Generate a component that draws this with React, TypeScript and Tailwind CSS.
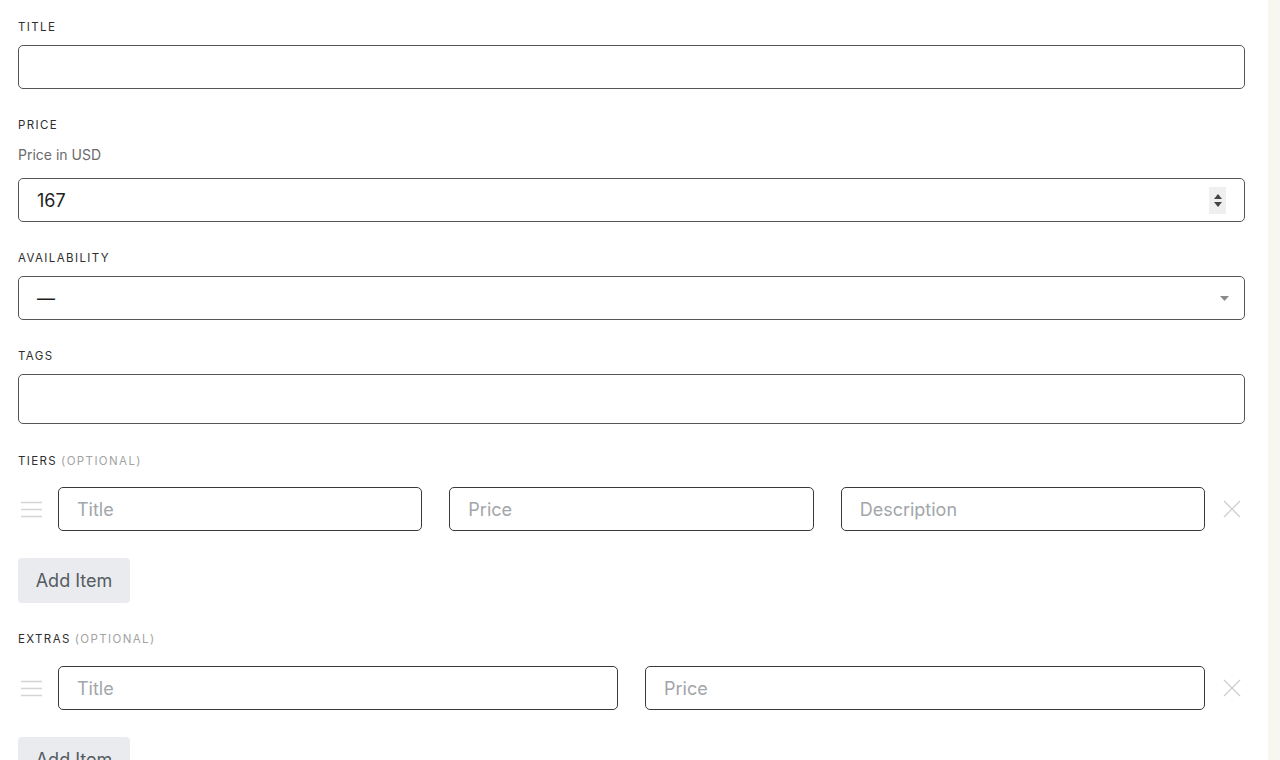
const Label = ({ text, optional }: { text: string; optional?: boolean }) => (
  <div className="h-4 pt-[1px] text-[11.5px] leading-4 font-normal tracking-[0.12em] text-[#2e2e2e]">
    {text}
    {optional && <span className="ml-1 text-[#a3a3a3]">(OPTIONAL)</span>}
  </div>
);

const Grip = () => (
  <div className="w-10 flex items-center">
    <svg width="22" height="18" viewBox="0 0 22 18" className="ml-[3px]">
      <path d="M0 2.5h21M0 9.5h21M0 16.5h21" stroke="#d4d4d4" strokeWidth="1.4" />
    </svg>
  </div>
);

const Remove = () => (
  <div className="w-10 flex items-center justify-end pr-[4px]">
    <svg width="18" height="18" viewBox="0 0 18 18">
      <path d="M1 1L17 17M17 1L1 17" stroke="#cfcfcf" strokeWidth="1.4" />
    </svg>
  </div>
);

const TextBox = ({ placeholder }: { placeholder: string }) => (
  <div className="h-[44px] border border-[#3a3a3a] rounded-[5px] flex items-center px-[18px] text-[18px] text-[#a2a6aa]">
    {placeholder}
  </div>
);

const AddItem = () => (
  <button className="h-[45px] w-[112px] rounded-[4px] bg-[#e9ebee] text-[18px] text-[#555b63]">
    Add Item
  </button>
);

export default function App() {
  return (
    <div className="flex h-screen overflow-hidden bg-white" style={{ fontFamily: 'Inter, "Noto Sans", sans-serif' }}>
      <main className="flex-1 pl-[18px] pr-[23px] pt-[18px]">
        {/* title */}
        <Label text="TITLE" />
        <div className="mt-[11px] h-[44px] border border-[#555] rounded-[5px]" />

        {/* price */}
        <div className="mt-[27px]">
          <Label text="PRICE" />
          <div className="mt-[13px] h-5 text-[14px] leading-5 text-[#6b6b6b]">Price in USD</div>
          <div className="mt-[13px] h-[44px] border border-[#555] rounded-[5px] flex items-center justify-between pl-[18px] pr-[18px]">
            <span className="text-[18px] text-[#1f1f1f]">167</span>
            <div className="w-[17px] h-[27px] bg-[#efefef] flex flex-col items-center justify-center gap-[3px]">
              <svg width="8" height="5" viewBox="0 0 8 5"><path d="M0 5L4 0L8 5Z" fill="#444" /></svg>
              <svg width="8" height="5" viewBox="0 0 8 5"><path d="M0 0L4 5L8 0Z" fill="#444" /></svg>
            </div>
          </div>
        </div>

        {/* availability */}
        <div className="mt-[27px]">
          <Label text="AVAILABILITY" />
          <div className="mt-[11px] h-[44px] border border-[#555] rounded-[5px] flex items-center justify-between pl-[18px] pr-[15px]">
            <span className="text-[18px] text-[#1f1f1f]">—</span>
            <svg width="9" height="5" viewBox="0 0 9 5"><path d="M0 0L4.5 5L9 0Z" fill="#8a8a8a" /></svg>
          </div>
        </div>

        {/* tags */}
        <div className="mt-[27px]">
          <Label text="TAGS" />
          <div className="mt-[11px] h-[50px] border border-[#555] rounded-[5px]" />
        </div>

        {/* tiers */}
        <div className="mt-[28px]">
          <Label text="TIERS" optional />
          <div className="mt-[19px] flex">
            <Grip />
            <div className="flex-1 grid grid-cols-3 gap-[27px]">
              <TextBox placeholder="Title" />
              <TextBox placeholder="Price" />
              <TextBox placeholder="Description" />
            </div>
            <Remove />
          </div>
          <div className="mt-[27px]">
            <AddItem />
          </div>
        </div>

        {/* extras */}
        <div className="mt-[27px]">
          <Label text="EXTRAS" optional />
          <div className="mt-[20px] flex">
            <Grip />
            <div className="flex-1 grid grid-cols-2 gap-[27px]">
              <TextBox placeholder="Title" />
              <TextBox placeholder="Price" />
            </div>
            <Remove />
          </div>
          <div className="mt-[27px]">
            <AddItem />
          </div>
        </div>
      </main>
      <aside className="w-[12px] bg-[#f8f6f0]" />
    </div>
  );
}
